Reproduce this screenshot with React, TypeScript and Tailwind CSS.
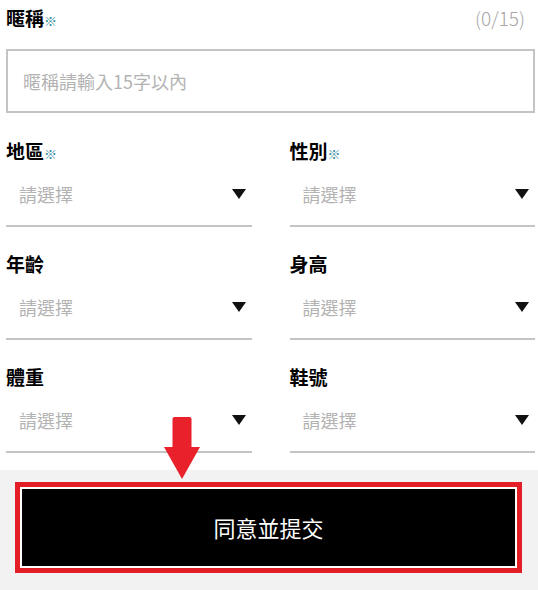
const fields = [
  { id: "region", label: "地區", required: true },
  { id: "gender", label: "性別", required: true },
  { id: "age", label: "年齡", required: false },
  { id: "height", label: "身高", required: false },
  { id: "weight", label: "體重", required: false },
  { id: "shoe", label: "鞋號", required: false },
];

const Label = ({ text, required }: { text: string; required?: boolean }) => (
  <p className="h-[24px] text-[19px] font-bold leading-[24px] text-black">
    {text}
    {required && <span className="text-[13px] font-bold text-[#2f8a9e]">※</span>}
  </p>
);

const App = () => {
  const cells = fields.map((f) => (
    <div key={f.id} className="flex flex-col">
      <Label text={f.label} required={f.required} />
      <div className="flex h-[64px] items-center justify-between border-b-2 border-[#c4c4c4] pl-[13px] pr-[6px]">
        <span className="text-[18px] text-[#b3b3b3]">請選擇</span>
        <svg width="14" height="10" viewBox="0 0 14 10">
          <polygon points="0,0 14,0 7,10" fill="#111" />
        </svg>
      </div>
    </div>
  ));

  return (
    <div
      className="relative flex h-[590px] w-[538px] flex-col overflow-hidden bg-white"
      style={{ fontFamily: '"Noto Sans CJK TC", "Noto Sans", sans-serif' }}
    >
      <section className="pl-[6px] pr-[3px] pt-[6px]">
        <div className="flex items-center justify-between">
          <Label text="暱稱" required />
          <span className="pr-[10px] text-[19px] font-light leading-[24px] text-[#a6a6a6]">(0/15)</span>
        </div>
        <div className="mt-[19px] flex h-[64px] items-center border-2 border-[#c4c4c4] pl-[15px]">
          <span className="text-[18px] text-[#b3b3b3]">暱稱請輸入15字以內</span>
        </div>
        <div className="mt-[26px] grid grid-cols-2 gap-x-[38px] gap-y-[25px]">{cells}</div>
      </section>

      <div className="mt-[17px] flex-1 bg-[#f2f2f2] pl-[15px] pr-[16px] pt-[12px]">
        <div className="border-[5px] border-[#e31e26] bg-white p-[2px]">
          <button className="flex h-[77px] w-full items-center justify-center bg-black text-[22px] text-white">
            同意並提交
          </button>
        </div>
      </div>

      <svg
        className="absolute left-[164px] top-[417px]"
        width="36"
        height="62"
        viewBox="0 0 36 62"
      >
        <path d="M8.5 2 Q8.5 0 10.5 0 H25.5 Q27.5 0 27.5 2 V30 H36 L18 62 L0 30 H8.5 Z" fill="#e8212a" />
      </svg>
    </div>
  );
};

export default App;
